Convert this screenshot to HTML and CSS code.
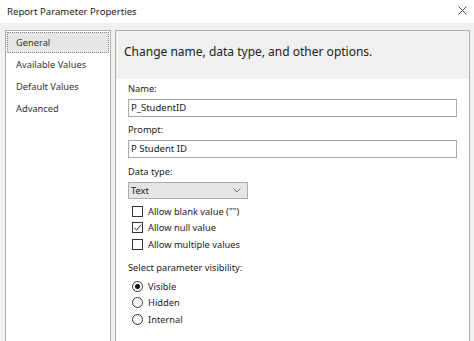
FILE: index.html
```html
<!DOCTYPE html>
<html>
<head>
<meta charset="utf-8">
<link rel="stylesheet" href="styles.css">
</head>
<body>
<div class="titlebar">
  <span class="title">Report Parameter Properties</span>
  <svg class="close" width="9" height="9" viewBox="0 0 9 9"><path d="M0.5 0.5 L8.5 8.5 M8.5 0.5 L0.5 8.5" stroke="#333" stroke-width="0.9"/></svg>
</div>
<div class="main">
  <div class="nav">
    <div class="nav-item selected">General</div>
    <div class="nav-item">Available Values</div>
    <div class="nav-item">Default Values</div>
    <div class="nav-item">Advanced</div>
  </div>
  <div class="panel">
    <div class="header">Change name, data type, and other options.</div>
    <div class="content">
      <div class="label l-name">Name:</div>
      <div class="input">P_StudentID</div>
      <div class="label l-prompt">Prompt:</div>
      <div class="input">P Student ID</div>
      <div class="label l-type">Data type:</div>
      <div class="select"><span>Text</span>
        <svg width="8" height="5" viewBox="0 0 8 5"><path d="M0.5 0.5 L4 4 L7.5 0.5" fill="none" stroke="#666" stroke-width="0.9"/></svg>
      </div>
      <div class="checks">
        <div class="opt"><span class="box"></span><span>Allow blank value ("")</span></div>
        <div class="opt"><span class="box"><svg width="9" height="9" viewBox="0 0 9 9"><path d="M1 4.6 L3.6 7.1 L8 1.8" fill="none" stroke="#333" stroke-width="1"/></svg></span><span>Allow null value</span></div>
        <div class="opt"><span class="box"></span><span>Allow multiple values</span></div>
      </div>
      <div class="label l-vis">Select parameter visibility:</div>
      <div class="radios">
        <div class="opt"><span class="radio on"></span><span>Visible</span></div>
        <div class="opt"><span class="radio"></span><span>Hidden</span></div>
        <div class="opt"><span class="radio"></span><span>Internal</span></div>
      </div>
    </div>
  </div>
</div>
</body>
</html>
```
FILE: styles.css
```css
html, body {
  margin: 0;
  padding: 0;
}
body {
  width: 474px;
  height: 341px;
  overflow: hidden;
  background: #f0f0f0;
  font-family: "Noto Sans", "Open Sans", sans-serif;
  font-size: 9.3px;
  color: #222;
}
.titlebar {
  height: 23px;
  background: #ffffff;
  display: flex;
  align-items: center;
  justify-content: space-between;
  padding: 0 7px 0 7px;
  box-sizing: border-box;
}
.title {
  font-size: 9.6px;
  margin-top: -1px;
}
.close {
  margin-top: -3px;
}
.main {
  display: flex;
  padding: 7px 4px 0 5px;
  gap: 4px;
}
.nav {
  width: 106px;
  height: 320px;
  box-sizing: border-box;
  border: 1px solid #adadad;
  background: #ffffff;
  padding: 1px 1px;
}
.nav-item {
  height: 22px;
  line-height: 21px;
  padding-left: 9px;
  box-sizing: border-box;
  font-size: 9.3px;
  color: #333;
}
.nav-item.selected {
  background: #e6e6e6;
  border: 1px dotted #888;
  padding-left: 8px;
  line-height: 19px;
  height: 21px;
  margin-bottom: 1px;
}
.panel {
  flex: 1;
  height: 320px;
  box-sizing: border-box;
  border: 1px solid #adadad;
  background: #ffffff;
}
.header {
  height: 48px;
  background: #f0f0f0;
  padding-left: 8px;
  line-height: 42px;
  font-size: 12px;
  color: #222;
}
.content {
  padding: 0 0 0 12px;
}
.label {
  height: 12px;
  line-height: 12px;
}
.l-name { margin-top: 4px; }
.l-prompt { margin-top: 7px; }
.l-type { margin-top: 8px; }
.l-vis { margin-top: 9.5px; }
.input {
  margin-top: 4px;
  width: 329px;
  height: 18px;
  box-sizing: border-box;
  border: 1px solid #a8a8a8;
  background: #fff;
  padding-left: 2px;
  line-height: 16px;
  font-size: 9.5px;
}
.select {
  margin-top: 4px;
  width: 120px;
  height: 17px;
  box-sizing: border-box;
  border: 1px solid #adadad;
  background: #e5e5e5;
  display: flex;
  align-items: center;
  justify-content: space-between;
  padding: 0 6px 0 2px;
}
.checks {
  margin-top: 4px;
  padding-left: 4px;
}
.radios {
  margin-top: 4px;
  padding-left: 4px;
}
.opt {
  display: flex;
  align-items: center;
  height: 16.5px;
  gap: 5px;
}
.box {
  width: 11px;
  height: 11px;
  box-sizing: border-box;
  border: 1px solid #333;
  background: #fff;
  display: flex;
  align-items: center;
  justify-content: center;
}
.box svg {
  display: block;
}
.radio {
  width: 11px;
  height: 11px;
  box-sizing: border-box;
  border: 1px solid #333;
  border-radius: 50%;
  background: #fff;
  position: relative;
}
.radio.on::after {
  content: "";
  position: absolute;
  left: 2px;
  top: 2px;
  width: 5px;
  height: 5px;
  border-radius: 50%;
  background: #111;
}
```
